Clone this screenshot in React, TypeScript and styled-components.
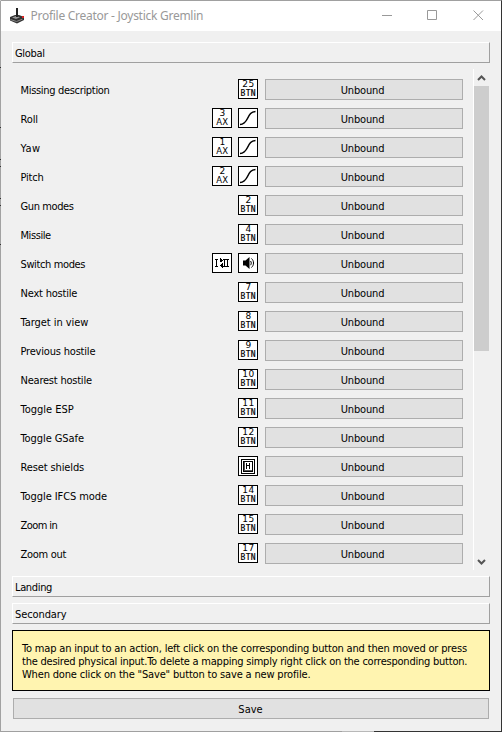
import React from "react";
import styled, { createGlobalStyle } from "styled-components";

const Page = createGlobalStyle`
  *, *::before, *::after { box-sizing: border-box; }
  body { margin: 0; background: #f0f0f0; overflow: hidden; }
`;

const uiFont = `"DejaVu Sans Condensed", "DejaVu Sans", sans-serif`;

const tick = (y: number) => `#333 ${y}px, #333 ${y + 1}px, #a2a2a2 ${y + 1}px, #a2a2a2`;

const Window = styled.div`
  width: 502px;
  height: 732px;
  display: flex;
  flex-direction: column;
  border: 1px solid #333;
  border-left-color: transparent;
  border-bottom-color: transparent;
  border-top-color: #a0a0a0;
  background:
    linear-gradient(#a2a2a2 67px, ${tick(67)} 127px, ${tick(127)} 159px, ${tick(159)} 166px,
      ${tick(166)} 198px, ${tick(198)} 205px, ${tick(205)} 244px, ${tick(244)} 100%)
      left top / 1px 100% no-repeat border-box,
    linear-gradient(90deg, #a0a0a0 342px, #b8b8b8 342px, #b8b8b8 374px, #333 374px)
      left bottom / 100% 1px no-repeat border-box,
    #f0f0f0;
  color: #000;
  font: 11px/13px ${uiFont};
`;

const TitleBar = styled.header`
  flex: none;
  height: 30px;
  display: flex;
  align-items: center;
  background: #fff;
  padding: 0 16px 0 8px;
`;

const Title = styled.h1`
  flex: 1;
  margin: 0 0 0 5.5px;
  font: 12px/16px "Noto Sans", sans-serif;
  letter-spacing: -0.27px;
  color: #999;
  white-space: nowrap;
`;

const Controls = styled.div`
  display: flex;
  gap: 34px;
  svg { display: block; }
`;

const Body = styled.main`
  flex: 1;
  display: flex;
  flex-direction: column;
  padding: 11px 11px 12px;
`;

const ModeHeader = styled.div`
  flex: none;
  height: 21px;
  margin-bottom: 6px;
  padding: 4px 0 0 2px;
  border: 1px solid;
  border-color: #fff #a0a0a0 #a0a0a0 #fff;
`;

const ScrollArea = styled.section`
  flex: none;
  height: 501px;
  display: flex;
  margin-bottom: 6px;
`;

const Rows = styled.div`
  width: 461px;
  padding: 10px 10px 0 8px;
  display: flex;
  flex-direction: column;
  gap: 8px;
`;

const Row = styled.div`
  height: 21px;
  display: flex;
`;

const Text = styled.span<{ $track?: number }>`
  letter-spacing: ${(p) => p.$track ?? 0}px;
  white-space: nowrap;
`;

const Label = styled.div`
  flex: 1;
  padding: 5px 0 0 0.5px;
`;

const Icons = styled.div`
  display: flex;
  gap: 6px;
  margin-right: 7px;
`;

const Badge = styled.div`
  width: 20px;
  height: 20px;
  border: 1px solid #000;
  background: #fff;
  display: flex;
  flex-direction: column;
  align-items: center;
  svg { display: block; margin: -1px; flex: none; }
`;

const Num = styled.span`
  font: 9px/9px "DejaVu Sans", sans-serif;
  height: 9px;
  letter-spacing: 0.4px;
  padding-left: 1px;
`;

const Kind = styled.span<{ $axis: boolean }>`
  font: ${(p) => (p.$axis ? "8.5px" : "8px")}/9px ${(p) => (p.$axis ? `"DejaVu Sans"` : `"DejaVu Sans Mono"`)}, sans-serif;
  height: 9px;
  -webkit-text-stroke: ${(p) => (p.$axis ? 0 : 0.2)}px #000;
  letter-spacing: 0.3px;
  padding-left: 0.5px;
`;

const Button = styled.button<{ $wide?: boolean }>`
  flex: none;
  width: ${(p) => (p.$wide ? "476px" : "198px")};
  height: 21px;
  align-self: center;
  padding: ${(p) => (p.$wide ? "1px 1px 0 0" : "1px 3px 0 0")};
  border: 1px solid #adadad;
  background: #e1e1e1;
  color: #000;
  font: 11px/13px ${uiFont};
`;

const ScrollBar = styled.div`
  width: 17px;
  border-left: 1px solid #fff;
  display: flex;
  flex-direction: column;
  svg { display: block; flex: none; }
`;

const Thumb = styled.div`
  width: 15px;
  height: 265px;
  margin-bottom: auto;
  background: #cdcdcd;
`;

const Note = styled.p`
  flex: none;
  height: 61px;
  margin: 0 0 7px;
  padding: 11px 9px;
  border: 1px solid #000;
  background: #fff4b0;
`;

const Line = styled.span<{ $track: number }>`
  display: block;
  white-space: nowrap;
  letter-spacing: ${(p) => p.$track}px;
`;

const JoystickIcon = () => (
  <svg width="16" height="16" viewBox="0 0 16 16">
    <path d="M1 9l5-2h4l5 2v3l-7 3.500-7-3z" fill="#333" />
    <path d="M3 9.500l4-1.500 4 1.200-4 1.800z" fill="#999" />
    <path d="M1.500 11.500l6 2 6-2.400" stroke="#888" fill="none" />
    <path d="M7 0h2v9H7z" fill="#222" />
    <path d="M13 8h2v2h-2z" fill="#d22" />
  </svg>
);

const Glyph = ({ kind }: { kind: string }) => (
  <svg width="20" height="20" viewBox="0 0 20 20" fill="none" stroke="#000">
    {kind === "curve" && (
      <path d="M2 16.500C6 16.300 7.500 14.500 9.500 10.500S13 3.700 17.500 3.500" strokeWidth="1.5" />
    )}
    {kind === "mode" && (
      <g shapeRendering="crispEdges">
        <path d="M3 6.500h3M4.500 6v8M3 13.500h3M11 6.500h6M12.500 6v8M15.500 6v8M11 13.500h6M8.500 5v4M10.500 10v5" />
        <path d="M8 5l3 2.500-3 2zM11 10l-3 2.500 3 2.500z" fill="#000" stroke="none" />
      </g>
    )}
    {kind === "sound" && (
      <>
        <path d="M5 7.500h2.500L11.500 4v12l-4-3.500H5z" fill="#000" stroke="none" />
        <path d="M12.500 8c1 1.200 1 3 0 4.200M13.500 5.500c2.700 2.500 2.700 6.500 0 9" />
      </>
    )}
    {kind === "hat" && (
      <g shapeRendering="crispEdges">
        <path d="M3.500 3.500h13v14h-13zM5.500 5.500h9v10h-9z" />
        <path d="M6.500 6v9M6 14.500h8" stroke="#555" />
        <path d="M8.500 7v6M11.500 7v6M8 9.500h4" />
      </g>
    )}
  </svg>
);

type Item = { kind: string; n?: number };
const btn = (n: number): Item[] => [{ kind: "BTN", n }];
const axis = (n: number): Item[] => [{ kind: "AX", n }, { kind: "curve" }];

// Action name, letter spacing, assigned inputs
const rows: [string, number, Item[]][] = [
  ["Missing description", -0.32, btn(25)],
  ["Roll", -0.15, axis(3)],
  ["Yaw", 0.4, axis(1)],
  ["Pitch", -0.2, axis(2)],
  ["Gun modes", -0.4, btn(2)],
  ["Missile", -0.42, btn(4)],
  ["Switch modes", -0.38, [{ kind: "mode" }, { kind: "sound" }]],
  ["Next hostile", -0.2, btn(7)],
  ["Target in view", -0.05, btn(8)],
  ["Previous hostile", -0.19, btn(9)],
  ["Nearest hostile", -0.22, btn(10)],
  ["Toggle ESP", 0, btn(11)],
  ["Toggle GSafe", -0.08, btn(12)],
  ["Reset shields", -0.12, [{ kind: "hat" }]],
  ["Toggle IFCS mode", -0.08, btn(14)],
  ["Zoom in", -0.58, btn(15)],
  ["Zoom out", -0.3, btn(17)],
];

export default function App() {
  return (
    <>
      <Page />
      <Window>
        <TitleBar>
          <JoystickIcon />
          <Title>Profile Creator - Joystick Gremlin</Title>
          <Controls>
            <svg width="12" height="12" stroke="#999"><path d="M1 5.500h10" /></svg>
            <svg width="12" height="12" stroke="#999" fill="none"><path d="M.5 .5h9v9h-9z" /></svg>
            <svg width="12" height="12" stroke="#999"><path d="M.5 .5l9.500 9.500M10 .5l-9.500 9.500" /></svg>
          </Controls>
        </TitleBar>
        <Body>
          <ModeHeader><Text $track={-0.3}>Global</Text></ModeHeader>
          <ScrollArea>
            <Rows>
              {rows.map(([name, track, items]) => (
                <Row key={name}>
                  <Label><Text $track={track}>{name}</Text></Label>
                  <Icons>
                    {items.map((it) => (
                      <Badge key={it.kind}>
                        {it.n === undefined ? <Glyph kind={it.kind} /> : (
                          <><Num>{it.n}</Num><Kind $axis={it.kind === "AX"}>{it.kind}</Kind></>
                        )}
                      </Badge>
                    ))}
                  </Icons>
                  <Button><Text $track={-0.15}>Unbound</Text></Button>
                </Row>
              ))}
            </Rows>
            <ScrollBar>
              <svg width="15" height="17" fill="none" stroke="#555" strokeWidth="2"><path d="M4 11l3.500-3.500L11 11" /></svg>
              <Thumb />
              <svg width="15" height="17" fill="none" stroke="#555" strokeWidth="2"><path d="M4 7l3.500 3.500L11 7" /></svg>
            </ScrollBar>
          </ScrollArea>
          <ModeHeader><Text $track={-0.35}>Landing</Text></ModeHeader>
          <ModeHeader><Text $track={-0.1}>Secondary</Text></ModeHeader>
          <Note>
            <Line $track={-0.175}>To map an input to an action, left click on the corresponding button and then moved or press</Line>
            <Line $track={-0.228}>the desired physical input.To delete a mapping simply right click on the corresponding button.</Line>
            <Line $track={-0.17}>When done click on the "Save" button to save a new profile.</Line>
          </Note>
          <Button $wide><Text>Save</Text></Button>
        </Body>
      </Window>
    </>
  );
}
